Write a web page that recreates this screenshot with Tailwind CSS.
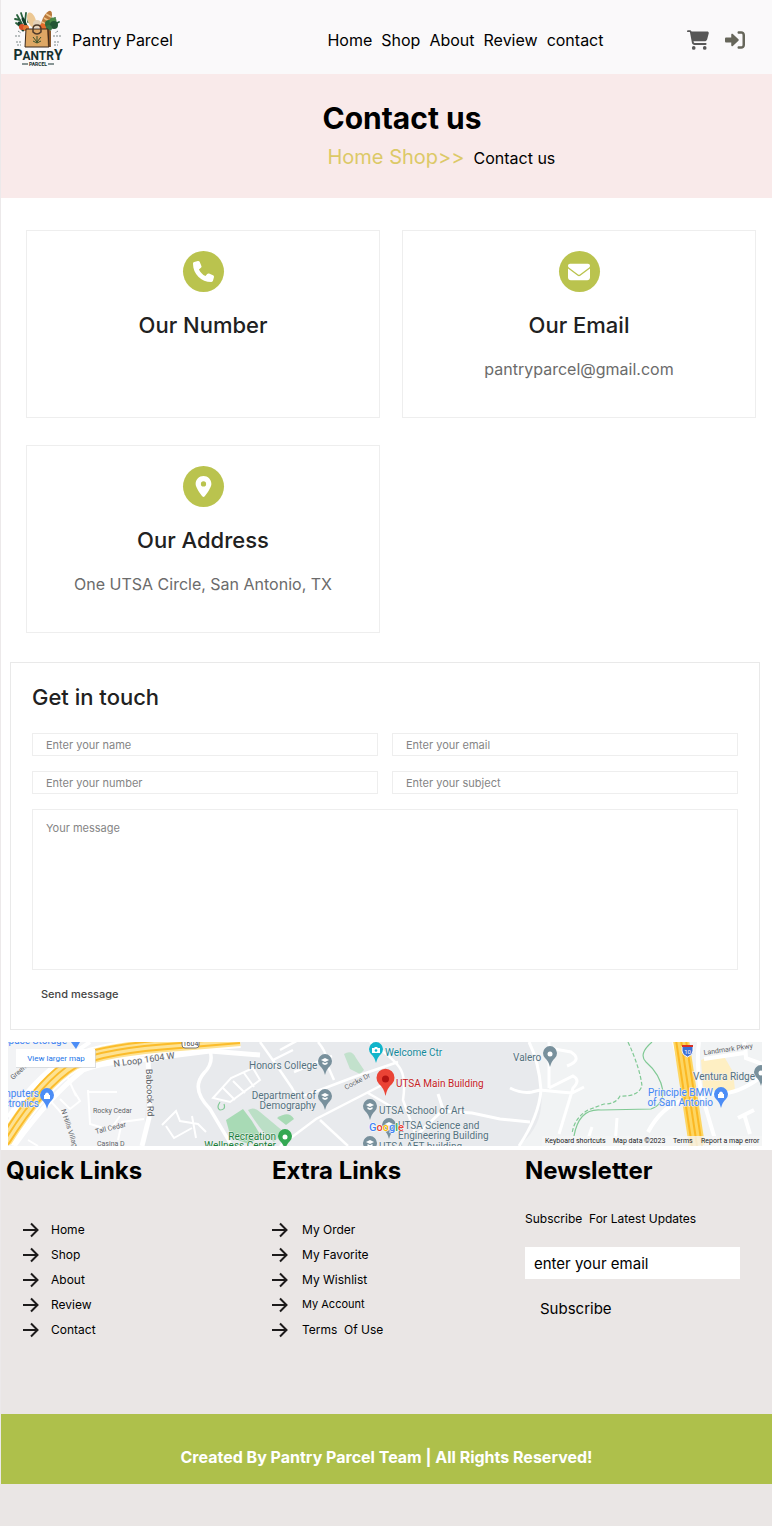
<!DOCTYPE html>
<html lang="en">
<head>
<meta charset="utf-8">
<meta name="viewport" content="width=device-width, initial-scale=1">
<title>Pantry Parcel - Contact us</title>
<script src="https://cdn.jsdelivr.net/npm/@tailwindcss/browser@4"></script>
</head>
<body class="min-h-screen bg-[#eae6e5] font-['Inter',sans-serif] text-black">
<svg class="hidden" aria-hidden="true">
  <symbol id="arrow" viewBox="0 0 16 16"><path d="M0 8h14M8 1.500l6.500 6.500L8 14.500" fill="none" stroke="#1d1b1b" stroke-width="2"/></symbol>
</svg>
<div class="border-l border-[#ece9ea]">

<header class="grid grid-cols-[42fr_58fr] items-center h-[74px] bg-[#faf9fa] pr-[27px]">
  <a href="#" class="flex items-center gap-[9px] pl-3 pt-1">
    <svg class="w-[50px] h-[58px]" viewBox="0 0 50 58" role="img" aria-label="Pantry Parcel logo">
      <g stroke-linecap="round">
        <path d="M9 14L4 5M11 12L8 3M12 12l1-9M15 12l2-8M8 17l-5-4M38 13l4-5M40 15l6-3M7 10L2 9" stroke="#29613c" stroke-width="1.800"/>
        <path d="M6 13l4 7M10 9l4 9" stroke="#143c2a" stroke-width="3"/>
      </g>
      <ellipse cx="19" cy="10" rx="4" ry="8" fill="#ecc894" transform="rotate(-20 19 11)"/>
      <ellipse cx="33" cy="10" rx="4" ry="10" fill="#b9793c" transform="rotate(25 33 11)"/>
      <path d="M33 4l5 3M31 8l5 3M29 12l5 3" stroke="#f0c486" stroke-width="1.500"/>
      <circle cx="9" cy="17" r="3" fill="#d9502a"/><circle cx="13" cy="18" r="3" fill="#e87933"/>
      <circle cx="24" cy="14" r="4" fill="#e4d2b9"/>
      <circle cx="30" cy="17" r="3.500" fill="#e66d2c"/>
      <circle cx="36" cy="14" r="4" fill="#2f6a3a"/><circle cx="40" cy="11" r="3.500" fill="#4b8a47"/><circle cx="41" cy="15" r="4" fill="#245634"/><circle cx="36" cy="18" r="3" fill="#397545"/>
      <path d="M13 19h22l1 18H12z" fill="#dea764"/><path d="M34 19l4 2v16h-3z" fill="#8c5829"/>
      <path d="M13 19h22l1 18H12z" fill="none" stroke="#39291c"/>
      <path d="M20 19q0-4 4-4t4 4v3q-4 4-8 0z" fill="none" stroke="#4f3b2b" stroke-width="1.500"/>
      <path d="M20 27l4 5 4-5M20 31l4 2 4-2M24 26v7" fill="none" stroke="#39502a"/>
      <path d="M2 26h6M3 32h5M4 35h4M40 26h8M41 32h6M41 35h4M5 21l3 2M45 21l-3 2" stroke="#7c8888" stroke-dasharray="2 1"/>
      <text x="25" y="50" text-anchor="middle" font-family="Roboto,sans-serif" font-weight="700" font-size="12" fill="#15302f"><tspan font-size="14">P</tspan>ANTR<tspan font-size="14">Y</tspan></text>
      <path d="M9 54h6M35 54h6" stroke="#15302f"/>
      <text x="25" y="56" text-anchor="middle" font-family="Roboto,sans-serif" font-weight="700" font-size="5" fill="#15302f">PARCEL</text>
    </svg>
    <span class="pt-0.5 text-base">Pantry Parcel</span>
  </a>
  <div class="flex items-center justify-between pl-3.5 pt-[5px]">
    <nav class="flex gap-[9px] text-base">
      <a href="#">Home</a><a href="#">Shop</a><a href="#">About</a><a href="#">Review</a><a href="#">contact</a>
    </nav>
    <div class="flex items-center gap-4">
      <a href="#" aria-label="Cart"><svg class="w-[22px] h-5" viewBox="0 0 576 512" fill="#575757"><path d="M0 24C0 10.700 10.700 0 24 0h45.500c22 0 41.500 12.800 50.600 32h411c26.300 0 45.500 25 38.600 50.400l-41 152.300c-8.500 31.400-37 53.300-69.500 53.300H170.700l5.400 28.500c2.200 11.300 12.100 19.500 23.600 19.500H488c13.300 0 24 10.700 24 24s-10.700 24-24 24H199.700c-34.600 0-64.300-24.600-70.700-58.500L77.400 54.500c-.7-3.800-4-6.500-7.900-6.500H24C10.700 48 0 37.300 0 24zm128 440a48 48 0 1 1 96 0 48 48 0 1 1-96 0zm336-48a48 48 0 1 1 0 96 48 48 0 1 1 0-96z"/></svg></a>
      <a href="#" aria-label="Log in"><svg class="w-5 h-5" viewBox="0 0 512 512" fill="#66665a"><path d="M352 96h64c17.700 0 32 14.300 32 32v256c0 17.700-14.300 32-32 32h-64c-17.700 0-32 14.300-32 32s14.300 32 32 32h64c53 0 96-43 96-96V128c0-53-43-96-96-96h-64c-17.700 0-32 14.300-32 32s14.300 32 32 32zm-7.500 177.500c4.800-4.500 7.500-10.800 7.500-17.500s-2.700-12.900-7.500-17.400l-144-136c-7-6.600-17.200-8.400-26-4.600S160 110.400 160 120v72H32c-17.700 0-32 14.300-32 32v64c0 17.700 14.300 32 32 32h128v72c0 9.600 5.700 18.200 14.500 22s19 2 26-4.600l144-136z"/></svg></a>
    </div>
  </div>
</header>

<section class="grid grid-cols-[42fr_58fr] bg-[#f9eaea] h-[124px] pr-[27px] pt-6">
  <div class="col-start-2 pl-[9px]">
    <h1 class="text-[30px] leading-10 font-bold">Contact us</h1>
    <p class="flex items-baseline gap-[9px] pl-[5px] pt-[3px]"><a href="#" class="text-xl leading-8 text-[#dcc967]">Home Shop&gt;&gt;</a><span class="text-base">Contact us</span></p>
  </div>
</section>

<main class="bg-white pb-1 text-[#212121]">
  <section class="grid grid-cols-2 gap-x-[22px] gap-y-[27px] pl-[25px] pr-4 pt-8">
    <article class="flex flex-col items-center border border-[#eeeeee] h-[188px] pt-5">
      <span class="flex size-[41px] items-center justify-center rounded-full bg-[#bac34e]"><svg class="size-[21px]" viewBox="0 0 512 512" fill="#fff"><path d="M164.900 24.600c-7.700-18.600-28-28.500-47.400-23.200l-88 24C12.100 30.200 0 46 0 64c0 247.400 200.600 448 448 448 18 0 33.800-12.100 38.600-29.500l24-88c5.300-19.400-4.600-39.700-23.200-47.400l-96-40c-16.300-6.800-35.200-2.100-46.300 11.600L304.700 368C234.300 334.700 177.300 277.700 144 207.300l49.300-40.300c13.700-11.200 18.400-30 11.600-46.300l-40-96z"/></svg></span>
      <h2 class="mt-[17px] text-[22px] leading-8 font-medium">Our Number</h2>
    </article>
    <article class="flex flex-col items-center border border-[#eeeeee] h-[188px] pt-5">
      <span class="flex size-[41px] items-center justify-center rounded-full bg-[#bac34e]"><svg class="size-[22px]" viewBox="0 0 512 512" fill="#fff"><path d="M48 64C21.500 64 0 85.500 0 112c0 15.100 7.100 29.300 19.200 38.400l217.600 163.200c11.400 8.500 27 8.500 38.400 0l217.600-163.200c12.100-9.100 19.200-23.300 19.200-38.400 0-26.500-21.500-48-48-48H48zM0 176v208c0 35.300 28.700 64 64 64h384c35.300 0 64-28.700 64-64V176L294.400 339.200c-22.800 17.100-54 17.100-76.800 0L0 176z"/></svg></span>
      <h2 class="mt-[17px] text-[22px] leading-8 font-medium">Our Email</h2>
      <p class="mt-4 text-base text-[#6b6b6b]">pantryparcel@gmail.com</p>
    </article>
    <article class="flex flex-col items-center border border-[#eeeeee] h-[188px] pt-5">
      <span class="flex size-[41px] items-center justify-center rounded-full bg-[#bac34e]"><svg class="size-[21px]" viewBox="0 0 384 512" fill="#fff"><path d="M215.700 499.200C267 435 384 279.400 384 192 384 86 298 0 192 0S0 86 0 192c0 87.400 117 243 168.300 307.200 12.300 15.300 35.100 15.300 47.400 0zM192 128a64 64 0 1 1 0 128 64 64 0 1 1 0-128z"/></svg></span>
      <h2 class="mt-[17px] text-[22px] leading-8 font-medium">Our Address</h2>
      <p class="mt-4 text-base text-[#6b6b6b]">One UTSA Circle, San Antonio, TX</p>
    </article>
  </section>

  <form class="mt-[29px] ml-[9px] mr-3 border border-[#e9e9e9] px-[21px] pt-[18px] pb-[27px]">
    <h2 class="text-[22px] leading-8 font-medium">Get in touch</h2>
    <div class="mt-5 grid grid-cols-2 gap-x-3.5 gap-y-[15px] text-[11px]">
      <input type="text" aria-label="Name" placeholder="Enter your name" class="h-[23px] min-w-0 border border-[#eeeeee] px-[13px] placeholder:text-[#858585]">
      <input type="email" aria-label="Email" placeholder="Enter your email" class="h-[23px] min-w-0 border border-[#eeeeee] px-[13px] placeholder:text-[#858585]">
      <input type="tel" aria-label="Number" placeholder="Enter your number" class="h-[23px] min-w-0 border border-[#eeeeee] px-[13px] placeholder:text-[#858585]">
      <input type="text" aria-label="Subject" placeholder="Enter your subject" class="h-[23px] min-w-0 border border-[#eeeeee] px-[13px] placeholder:text-[#858585]">
      <textarea aria-label="Message" placeholder="Your message" class="col-span-2 h-[161px] resize-none border border-[#eeeeee] px-[13px] py-2.5 placeholder:text-[#858585]"></textarea>
    </div>
    <button type="submit" class="mt-4 block pl-[9px] text-[11px] leading-4 font-medium text-[#444]">Send message</button>
  </form>

  <div class="mt-3 ml-[7px] mr-2.5">
    <svg class="block w-full h-[104px]" viewBox="0 0 754 104" preserveAspectRatio="xMidYMid slice" role="img" aria-label="Map of the UTSA Main Building" font-family="Roboto,sans-serif">
      <rect width="754" height="104" fill="#e8eaed"/>
      <path d="M0 0H210L140 22 136 104H0z" fill="#f2f3f5"/>
      <path d="M520 0h234v104H510q20-15 23-38 4-30-13-66z" fill="#f1f3f4"/>
      <g fill="#a8dab5"><path d="M218 78l17-11 9 12 9 15-12 8-18-6z"/><path d="M240 68q6-4 12 2l24 20-10 10q-10-6-26-32z" opacity=".7"/><path d="M269 76q12-8 17 1l-8 6z"/><path d="M336 12q8-5 12 4l8 12-4 4-10-5z" opacity=".6"/></g>
      <path d="M693 18l10-4 14 2 8 14 2 18-12 3-20-6z" fill="#feefc3"/>
      <g fill="none" stroke="#fff">
        <path d="M6 104Q40 56 75 28 95 20 138 17L202 9 252 13" stroke-width="5"/>
        <path d="M0 75Q30 30 70 8L82 0" stroke-width="4"/>
        <path d="M140 18Q142 55 141 76L134 104" stroke-width="5"/>
        <path d="M202 9q4 12-6 22-14 16 6 36l22 37" stroke-width="3.500"/>
        <path d="M252 0q16 22 32 46 5 12 20 5l42-16 44-15M272 8l22-12M286 30l38-16M265 18L285 8M310 0q10 12 8 20l8 18M362 0q26 18 31 28t2 30l14 38M272 104l36-27 70-36M312 78l28 26M360 51l24 14" stroke-width="2.500"/>
        <path d="M408 94l26-25 30 2 28 6 30 3M436 70l-6-18" stroke-width="3"/>
        <path d="M205 56l18-20 22-10 7 12-30 22zM215 46l12 12M225 39l12 12M236 31l10 14M154 83l14-14 4 10 18 3 8 8M158 84l8 12 18-10M184 74l4 22" stroke-width="2"/>
        <path d="M79 50h30M80 48l2 34 20 6 10-14M110 98l4-18 22-3M52 57l10 10 10-8-6-10M40 56l16 18M60 36l8 18M20 98l10 6" stroke-width="2"/>
        <path d="M521 0q10 20 12 48-2 26-22 56M502 46q12 6 22 4l8-2 20 2 12 1 12-6M541 0v46M541 6l22 4q12 8-4 14M541 46l24-12q8 4 0 12l-14 46M607 104l2-28M584 85l-4 12" stroke-width="3"/>
        <path d="M666 0l12 55 16 49M691 0q-3 20 2 50l16 54M694 50q30 8 60-16M736 0q2 8 2 16l16 6M696 17l40-6M640 90q14-26 36-32M730 76l16-8M736 72l6 20" stroke-width="4"/>
      </g>
      <path d="M-3 99Q34 40 66 21 95 7 172 2L232-3" fill="none" stroke="#fff" stroke-width="18"/>
      <path d="M-3 99Q34 40 66 21 95 7 172 2L232-3" fill="none" stroke="#fde293" stroke-width="14"/>
      <g fill="none" stroke="#fbbc2b" stroke-width="2"><path d="M-6 94Q30 35 63 16 93 2 172-3L230-8"/><path d="M-3 98Q34 39 66 20 95 6 172 1L232-4"/><path d="M0 103Q37 44 69 25 97 11 172 6L232 1"/></g>
      <path d="M673-2L689 104" stroke="#fdd663" stroke-width="16"/>
      <path d="M668-2l16 106M673-2l16 106M678-2l16 106" stroke="#fbb823" stroke-width="2"/>
      <g fill="none" stroke="#81c995" stroke-width="1.200"><path d="M620 0q12 26 14 44-4 11-22 10-4 8-16 8l-16 6q-14 8-16 24" stroke-dasharray="4 2"/><path d="M644 0q-14 12-6 20 14 12 17 29 0 14-12 18l-50 1q-22-2-27 26M212 60q-4 6 0 8 6 0 4-6"/></g>
      <defs>
        <path id="pin" d="M0 13Q-1.500 7-5 4A7 7 0 1 1 5 4Q1.500 7 0 13z"/>
        <path id="cap" d="M-4-2L0-4l4 2-4 2zM-2.500 0L0 1.300 2.500 0v2L0 3-2.500 2z" fill="#fff"/>
      </defs>
      <g fill="#78909c">
        <g transform="translate(317 20)"><use href="#pin"/><use href="#cap"/></g>
        <g transform="translate(317 55)"><use href="#pin"/><use href="#cap"/></g>
        <g transform="translate(362 65)"><use href="#pin"/><use href="#cap"/></g>
        <g transform="translate(381 84)"><use href="#pin"/><use href="#cap"/></g>
        <g transform="translate(362 102)"><use href="#pin"/><use href="#cap"/></g>
        <g transform="translate(542 12)"><use href="#pin"/><circle r="2.500" fill="#fff"/></g>
        <g transform="translate(753 31)"><use href="#pin"/><circle r="2.500" fill="#fff"/></g>
      </g>
      <g transform="translate(368 8)"><use href="#pin" fill="#12b5cb"/><path d="M-4-2h2l1-1h2l1 1h2v5h-8z" fill="#fff"/><circle r="1.300" cy=".5" fill="#12b5cb"/></g>
      <g transform="translate(39 54)" fill="#4c8df6"><use href="#pin"/><path d="M-3-1h6v4h-6zM-2-1v-1q2-3 4 0v1" fill="#fff"/></g>
      <g transform="translate(713 53)" fill="#4c8df6"><use href="#pin"/><path d="M-3-1h6v4h-6zM-2-1v-1q2-3 4 0v1" fill="#fff"/></g>
      <path d="M63 0h9l-4 7z" fill="#4c8df6"/>
      <g transform="translate(277 95)" fill="#34a853"><use href="#pin"/><circle r="2.500" fill="#fff"/></g>
      <path d="M377.500 54Q376 46 371 42A9 9 0 1 1 384 42Q379 46 377.500 54z" fill="#ea4335"/><circle cx="377.500" cy="37" r="3.500" fill="#b31412"/>
      <g stroke="#f2f3f5" stroke-width="1" paint-order="stroke" font-size="10">
        <g fill="#54717e">
          <text x="241" y="27">Honors College</text>
          <text x="308" y="57" text-anchor="end">Department of</text><text x="308" y="67" text-anchor="end">Demography</text>
          <text x="371" y="72">UTSA School of Art</text>
          <text x="390" y="87">UTSA Science and</text><text x="390" y="97">Engineering Building</text>
          <text x="371" y="108">UTSA AET building</text>
          <text x="505" y="19">Valero</text><text x="685" y="38">Ventura Ridge</text>
        </g>
        <text x="377" y="14" fill="#12899a">Welcome Ctr</text>
        <text x="388" y="45" fill="#c5221f">UTSA Main Building</text>
        <g fill="#4285f4"><text x="59" y="2" text-anchor="end">space Storage</text><text x="31" y="55" text-anchor="end">mputers</text><text x="31" y="65" text-anchor="end">ctronics</text><text x="705" y="54" text-anchor="end">Principle BMW</text><text x="705" y="64" text-anchor="end">of San Antonio</text></g>
        <g fill="#188038"><text x="268" y="98" text-anchor="end">Recreation</text><text x="268" y="107" text-anchor="end">Wellness Center</text></g>
        <g fill="#5f6368" font-size="7">
          <text transform="translate(106 25) rotate(-8)" font-size="9">N Loop 1604 W</text>
          <text transform="translate(138 27) rotate(88)" font-size="9">Babcock Rd</text>
          <text transform="translate(5 38) rotate(-42)">Green</text>
          <text transform="translate(53 68) rotate(72)">N Hills Village</text>
          <text x="85" y="71">Rocky Cedar</text><text transform="translate(88 92) rotate(-14)">Tall Cedar</text><text x="89" y="104">Casina D</text>
          <text transform="translate(338 48) rotate(-28)">Cocke Dr</text>
          <text transform="translate(696 13) rotate(-8)">Landmark Pkwy</text>
        </g>
      </g>
      <rect x="174" y="-3" width="17" height="9" rx="3" fill="#fff" stroke="#777"/><text x="182.500" y="4" text-anchor="middle" font-size="7" fill="#444">1604</text>
      <path d="M674 4h11v5q0 4-5.500 6-5.500-2-5.500-6z" fill="#3b6fd4" stroke="#fff"/><path d="M674 3h11v2h-11z" fill="#d93025"/><text x="679.500" y="12" text-anchor="middle" font-size="6" fill="#fff">10</text>
      <text x="361" y="89" font-size="11" font-weight="500" stroke="#fff" stroke-width="1" paint-order="stroke"><tspan fill="#4285f4">G</tspan><tspan fill="#ea4335">o</tspan><tspan fill="#fbbc04">o</tspan><tspan fill="#4285f4">g</tspan><tspan fill="#34a853">l</tspan><tspan fill="#ea4335">e</tspan></text>
      <rect x="8" y="8" width="80" height="18" fill="#cfd1d5" opacity=".7"/><rect x="8" y="7" width="79" height="18" fill="#fff"/><text x="48" y="19" text-anchor="middle" font-size="8" fill="#1a73e8">View larger map</text>
      <path d="M534 94h220v10H534z" fill="#f5f5f5" opacity=".8"/>
      <g font-size="7" fill="#202124"><text x="537" y="101">Keyboard shortcuts</text><text x="605" y="101">Map data ©2023</text><text x="665" y="101">Terms</text><text x="693" y="101">Report a map error</text></g>
    </svg>
  </div>
</main>

<footer>
  <div class="grid grid-cols-[266fr_253fr_247fr] h-[264px] pl-[5px]">
    <section>
      <h2 class="pt-[5px] text-2xl font-bold">Quick Links</h2>
      <ul class="mt-[30px] ml-[17px] text-xs">
        <li class="h-[25px]"><a href="#" class="flex h-full items-center gap-3"><svg class="size-4"><use href="#arrow"/></svg>Home</a></li>
        <li class="h-[25px]"><a href="#" class="flex h-full items-center gap-3"><svg class="size-4"><use href="#arrow"/></svg>Shop</a></li>
        <li class="h-[25px]"><a href="#" class="flex h-full items-center gap-3"><svg class="size-4"><use href="#arrow"/></svg>About</a></li>
        <li class="h-[25px]"><a href="#" class="flex h-full items-center gap-3"><svg class="size-4"><use href="#arrow"/></svg>Review</a></li>
        <li class="h-[25px]"><a href="#" class="flex h-full items-center gap-3"><svg class="size-4"><use href="#arrow"/></svg>Contact</a></li>
      </ul>
    </section>
    <section>
      <h2 class="pt-[5px] text-2xl font-bold">Extra Links</h2>
      <ul class="mt-[30px] text-xs">
        <li class="h-[25px]"><a href="#" class="flex h-full items-center gap-3.5"><svg class="size-4"><use href="#arrow"/></svg>My Order</a></li>
        <li class="h-[25px]"><a href="#" class="flex h-full items-center gap-3.5"><svg class="size-4"><use href="#arrow"/></svg>My Favorite</a></li>
        <li class="h-[25px]"><a href="#" class="flex h-full items-center gap-3.5"><svg class="size-4"><use href="#arrow"/></svg>My Wishlist</a></li>
        <li class="h-[25px]"><a href="#" class="flex h-full items-center gap-3.5 text-[11px]"><svg class="size-4"><use href="#arrow"/></svg>My Account</a></li>
        <li class="h-[25px]"><a href="#" class="flex h-full items-center gap-3.5"><svg class="size-4"><use href="#arrow"/></svg>Terms&nbsp; Of Use</a></li>
      </ul>
    </section>
    <form class="pr-8">
      <h2 class="pt-[5px] text-2xl font-bold">Newsletter</h2>
      <label for="news" class="mt-6 block text-xs">Subscribe&nbsp; For Latest Updates</label>
      <input id="news" type="email" placeholder="enter your email" class="mt-5 block h-8 w-full bg-white px-[9px] text-[15px] placeholder:text-black">
      <button type="submit" class="mt-[18px] block pl-[15px] text-[15px] leading-6">Subscribe</button>
    </form>
  </div>
  <p class="flex h-[70px] items-center justify-center bg-[#aec04b] pt-4 text-base font-bold text-white">Created By Pantry Parcel Team | All Rights Reserved!</p>
</footer>
</div>
</body>
</html>
